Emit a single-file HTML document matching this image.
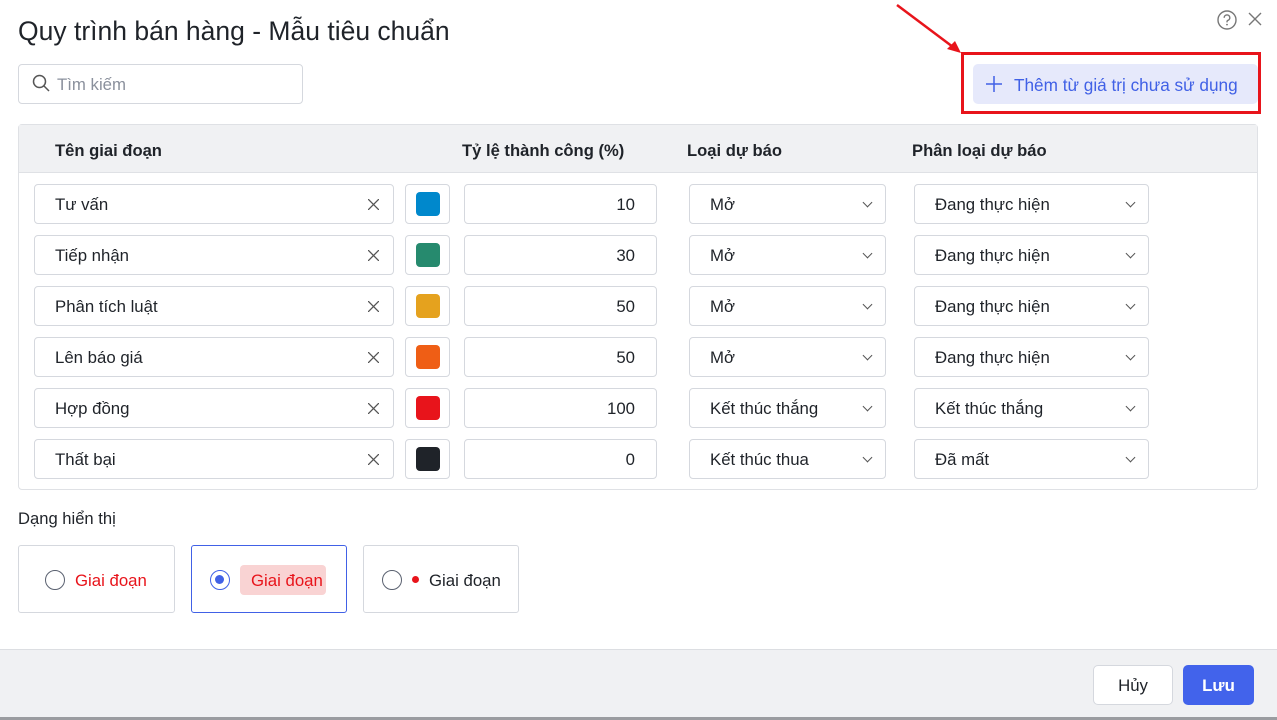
<!DOCTYPE html>
<html><head><meta charset="utf-8"><style>
*{box-sizing:border-box;margin:0;padding:0}
body{width:1277px;height:720px;overflow:hidden;background:#fff;font-family:"Liberation Sans",sans-serif;color:#1f2329;position:relative}
.a{position:absolute}
.inp{position:absolute;border:1px solid #d5d8de;border-radius:4px;background:#fff;height:40px;font-size:16.8px;line-height:40px}
.th{position:absolute;top:140px;font-size:16.6px;font-weight:bold;color:#1f2329}
.chev{position:absolute;right:14px;top:14px;width:7px;height:7px;border-right:1.3px solid #555;border-bottom:1.3px solid #555;transform:rotate(45deg)}
.card{position:absolute;top:545px;height:68px;border:1px solid #d5d8de;border-radius:3px;font-size:16.8px}
.rad{position:absolute;top:24px;width:20px;height:20px;border:1.5px solid #5a6170;border-radius:50%}
</style></head><body>
<div class="a" style="left:18px;top:16px;font-size:26.5px;color:#1f2329">Quy trình bán hàng - Mẫu tiêu chuẩn</div>
<svg class="a" style="left:1216px;top:9px" width="22" height="22" viewBox="0 0 22 22"><circle cx="11" cy="11" r="9" fill="none" stroke="#777" stroke-width="1.4"/><path d="M8.2 8.8a2.8 2.8 0 1 1 3.6 2.6c-.6.3-.8.7-.8 1.4v.6" fill="none" stroke="#777" stroke-width="1.4"/><circle cx="11" cy="15.6" r=".9" fill="#777"/></svg>
<svg class="a" style="left:1247px;top:11px" width="16" height="16"><path d="M2 2L14 14M14 2L2 14" stroke="#777" stroke-width="1.4"/></svg>
<svg class="a" style="left:895px;top:3px" width="70" height="52"><path d="M2 2L62 47" stroke="#e8141b" stroke-width="2.5"/><path d="M66 50L52 46L60 38Z" fill="#e8141b"/></svg>
<div class="a" style="left:961px;top:52px;width:300px;height:62px;border:3px solid #e8141b"></div>
<div class="a" style="left:973px;top:64px;width:285px;height:40px;background:#e6e9fb;border-radius:5px;color:#4161e6;font-size:17.2px;line-height:42px;padding-left:41px">Thêm từ giá trị chưa sử dụng</div>
<svg class="a" style="left:986px;top:76px" width="16" height="16"><path d="M8 0V16M0 8H16" stroke="#4161e6" stroke-width="1.5"/></svg>
<div class="inp" style="left:18px;top:64px;width:285px;color:#8a909c;padding-left:38px">Tìm kiếm</div>
<svg class="a" style="left:32px;top:74px" width="18" height="18"><circle cx="7.5" cy="7.5" r="6" fill="none" stroke="#555" stroke-width="1.5"/><path d="M12 12L17 17" stroke="#555" stroke-width="1.5"/></svg>
<div class="a" style="left:18px;top:124px;width:1240px;height:366px;border:1px solid #dfe1e5;border-radius:4px"></div>
<div class="a" style="left:19px;top:125px;width:1238px;height:48px;background:#f0f1f3;border-bottom:1px solid #dfe1e5"></div>
<div class="th" style="left:55px;top:141px">Tên giai đoạn</div>
<div class="th" style="left:462px;top:141px">Tỷ lệ thành công (%)</div>
<div class="th" style="left:687px;top:141px">Loại dự báo</div>
<div class="th" style="left:912px;top:141px">Phân loại dự báo</div>
<div id="rows"></div>
<script>
var d=[["Tư vấn","#0088cc","10","Mở","Đang thực hiện"],["Tiếp nhận","#268a6e","30","Mở","Đang thực hiện"],["Phân tích luật","#e5a21e","50","Mở","Đang thực hiện"],["Lên báo giá","#ef5e15","50","Mở","Đang thực hiện"],["Hợp đồng","#e8141b","100","Kết thúc thắng","Kết thúc thắng"],["Thất bại","#1f2329","0","Kết thúc thua","Đã mất"]];
var h="";d.forEach(function(r,i){var y=184+i*51;
h+='<div class="inp" style="left:34px;top:'+y+'px;width:360px;padding-left:20px">'+r[0]+'<svg style="position:absolute;right:14px;top:14px" width="11" height="11"><path d="M0 0L11 11M11 0L0 11" stroke="#555" stroke-width="1.3"/></svg></div>';
h+='<div class="inp" style="left:405px;top:'+y+'px;width:45px"><div style="position:absolute;left:10px;top:7px;width:24px;height:24px;border-radius:4px;background:'+r[1]+'"></div></div>';
h+='<div class="inp" style="left:464px;top:'+y+'px;width:193px;text-align:right;padding-right:21px">'+r[2]+'</div>';
h+='<div class="inp" style="left:689px;top:'+y+'px;width:197px;padding-left:20px">'+r[3]+'<div class="chev"></div></div>';
h+='<div class="inp" style="left:914px;top:'+y+'px;width:235px;padding-left:20px">'+r[4]+'<div class="chev"></div></div>';});
document.getElementById("rows").innerHTML=h;
</script>
<div class="a" style="left:18px;top:509px;font-size:16.6px">Dạng hiển thị</div>
<div class="card" style="left:18px;width:157px"><div class="rad" style="left:26px"></div><span class="a" style="left:56px;top:25px;color:#e8141b">Giai đoạn</span></div>
<div class="card" style="left:191px;width:156px;border-color:#4161e6"><div class="rad" style="left:18px;border-color:#4161e6"><div style="position:absolute;left:4px;top:4px;width:9px;height:9px;border-radius:50%;background:#4161e6"></div></div><span class="a" style="left:48px;top:19px;height:30px;line-height:31px;padding:0 3px 0 11px;border-radius:4px;background:#f9d3d3;color:#e8141b">Giai đoạn</span></div>
<div class="card" style="left:363px;width:156px"><div class="rad" style="left:18px"></div><div class="a" style="left:48px;top:30px;width:7px;height:7px;border-radius:50%;background:#e8141b"></div><span class="a" style="left:65px;top:25px">Giai đoạn</span></div>
<div class="a" style="left:0;top:649px;width:1277px;height:68px;background:#f0f1f3;border-top:1px solid #dcdee2"></div>
<div class="a" style="left:0;top:717px;width:1277px;height:3px;background:#9a9ca0"></div>
<div class="a" style="left:1093px;top:665px;width:80px;height:40px;border:1px solid #d5d8de;border-radius:5px;background:#fff;text-align:center;line-height:40px;font-size:16.8px">Hủy</div>
<div class="a" style="left:1183px;top:665px;width:71px;height:40px;border-radius:5px;background:#4263eb;color:#fff;text-align:center;line-height:41px;font-size:16.8px;font-weight:bold">Lưu</div>
</body></html>
